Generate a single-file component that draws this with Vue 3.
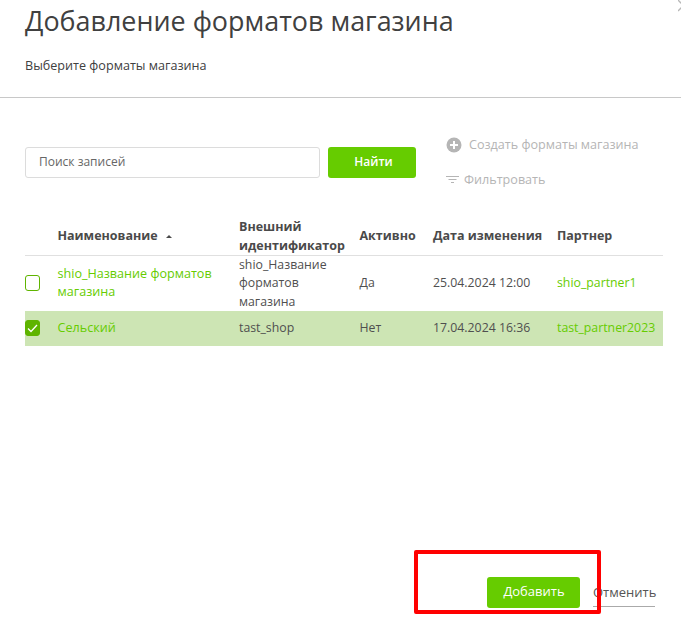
<script setup>
const rows = [
  { name: 'shio_Название форматов магазина', ext: 'shio_Название форматов магазина', active: 'Да', date: '25.04.2024 12:00', partner: 'shio_partner1', checked: false },
  { name: 'Сельский', ext: 'tast_shop', active: 'Нет', date: '17.04.2024 16:36', partner: 'tast_partner2023', checked: true }
]
</script>

<template>
  <div class="page">
    <svg class="close" width="12" height="12" viewBox="0 0 12 12"><path d="M0 0l11 11M0 11L11 0" stroke="#b8b8b8" stroke-width="1.3" fill="none" /></svg>
    <header class="head">
      <h1>Добавление форматов магазина</h1>
      <p>Выберите форматы магазина</p>
    </header>
    <section class="tools">
      <div class="search">Поиск записей</div>
      <button class="btn find">Найти</button>
      <div class="actions">
        <div class="act create">
          <svg width="16" height="16" viewBox="0 0 16 16"><circle cx="8" cy="8" r="7.5" fill="#b5b5b5" /><path d="M8 4v8M4 8h8" stroke="#fff" stroke-width="2" /></svg>
          <span>Создать форматы магазина</span>
        </div>
        <div class="act filter">
          <svg width="13" height="9" viewBox="0 0 13 9"><path d="M0 1.5h13M2.5 4.5h8M5 7.5h3" stroke="#b5b5b5" stroke-width="1" /></svg>
          <span>Фильтровать</span>
        </div>
      </div>
    </section>
    <table class="grid">
      <colgroup>
        <col class="c1" /><col class="c2" /><col class="c3" /><col class="c4" /><col class="c5" /><col class="c6" />
      </colgroup>
      <thead>
        <tr>
          <th></th>
          <th>Наименование <span class="sort"></span></th>
          <th>Внешний идентификатор</th>
          <th>Активно</th>
          <th>Дата изменения</th>
          <th>Партнер</th>
        </tr>
      </thead>
      <tbody>
        <tr v-for="r in rows" :key="r.name" :class="{ sel: r.checked }">
          <td class="chk">
            <span class="box" :class="{ on: r.checked }">
              <svg v-if="r.checked" width="11" height="9" viewBox="0 0 11 9"><path d="M1 4.5l3 3 6-6.5" stroke="#fff" stroke-width="1.3" fill="none" /></svg>
            </span>
          </td>
          <td class="link name">{{ r.name }}</td>
          <td class="ext">{{ r.ext }}</td>
          <td>{{ r.active }}</td>
          <td>{{ r.date }}</td>
          <td class="link">{{ r.partner }}</td>
        </tr>
      </tbody>
    </table>
    <footer class="foot">
      <button class="btn add">Добавить</button>
      <a class="cancel">Отменить</a>
    </footer>
    <div class="mark"></div>
  </div>
</template>

<style>
html, body { margin: 0; background: #fff; }
</style>

<style scoped>
.page {
  position: relative;
  width: 681px;
  height: 623px;
  overflow: hidden;
  background: #fff;
  font-family: "Open Sans", sans-serif;
  color: #4a4a4a;
  font-size: 12px;
}
.close { position: absolute; left: 678px; top: 0; }
.head {
  height: 97px;
  border-bottom: 1px solid #c8c8c8;
  padding: 0 25px;
}
.head h1 {
  margin: 0;
  padding-top: 3px;
  font-size: 26.9px;
  line-height: 36px;
  font-weight: 400;
  color: #404040;
}
.head p {
  margin: 17px 0 0;
  font-size: 12.6px;
  line-height: 20px;
  color: #404040;
}
.tools {
  display: flex;
  padding: 33px 25px 0;
  height: 81px;
}
.search {
  width: 295px;
  height: 31px;
  box-sizing: border-box;
  margin-top: 16px;
  border: 1px solid #dcdcdc;
  border-radius: 3px;
  padding-left: 13px;
  line-height: 27px;
  color: #666;
}
.btn {
  border: 0;
  border-radius: 3px;
  background: #66cc00;
  color: #fff;
  font-family: inherit;
  font-size: 13px;
  padding: 0 0 3px;
}
.find {
  width: 88px;
  height: 31px;
  margin: 16px 0 0 8px;
  padding-left: 3px;
  font-size: 12px;
  font-weight: 600;
}
.add { padding-left: 1px; }
.actions {
  margin-left: 30px;
  display: flex;
  flex-direction: column;
  gap: 17px;
  padding-top: 5px;
}
.act {
  display: flex;
  align-items: center;
  color: #b5b5b5;
  font-size: 12.6px;
  line-height: 17px;
}
.create { gap: 7px; }
.filter { gap: 5px; padding-top: 1px; }
.grid {
  margin: 0 0 0 25px;
  width: 638px;
  border-collapse: collapse;
  table-layout: fixed;
}
.c1 { width: 32.5px; }
.c2 { width: 181.5px; }
.c3 { width: 120.5px; }
.c4 { width: 73.5px; }
.c5 { width: 124px; }
.c6 { width: 106px; }
.grid th {
  height: 39px;
  padding: 4px 0 0;
  text-align: left;
  vertical-align: middle;
  font-size: 12.5px;
  line-height: 19px;
  font-weight: 700;
  color: #4a4a4a;
  border-bottom: 1px solid #e0e0e0;
  white-space: normal;
}
.sort {
  display: inline-block;
  width: 0;
  height: 0;
  margin: 0 0 2px 5px;
  border-left: 3.5px solid transparent;
  border-right: 3.5px solid transparent;
  border-bottom: 3.5px solid #4a4a4a;
}
.grid td {
  padding: 0;
  font-size: 12.3px;
  line-height: 18px;
  vertical-align: middle;
  color: #4f4f4f;
}
.grid .link { color: #66cc00; }
.grid .name { font-size: 12.6px; }
.grid .ext { padding-right: 14px; line-height: 18.3px; }
.grid tbody tr { height: 35px; }
.grid tbody tr:first-child { height: 55px; }
.grid .sel td { background: #cde5b4; }
.box {
  display: flex;
  align-items: center;
  justify-content: center;
  width: 15px;
  height: 16px;
  box-sizing: border-box;
  border: 1px solid #5fb400;
  border-radius: 3px;
}
.box.on { background: #5fb400; }
.foot {
  position: absolute;
  left: 487px;
  top: 577px;
  display: flex;
}
.add {
  width: 93px;
  height: 31px;
}
.cancel {
  margin-left: 13px;
  width: 62px;
  height: 29px;
  line-height: 30px;
  font-size: 13px;
  color: #555;
  border-bottom: 1px solid #aaa;
  white-space: nowrap;
}
.mark {
  position: absolute;
  left: 414px;
  top: 550px;
  width: 187px;
  height: 64px;
  box-sizing: border-box;
  border: 4px solid #ff0000;
  border-radius: 2px;
}
</style>
